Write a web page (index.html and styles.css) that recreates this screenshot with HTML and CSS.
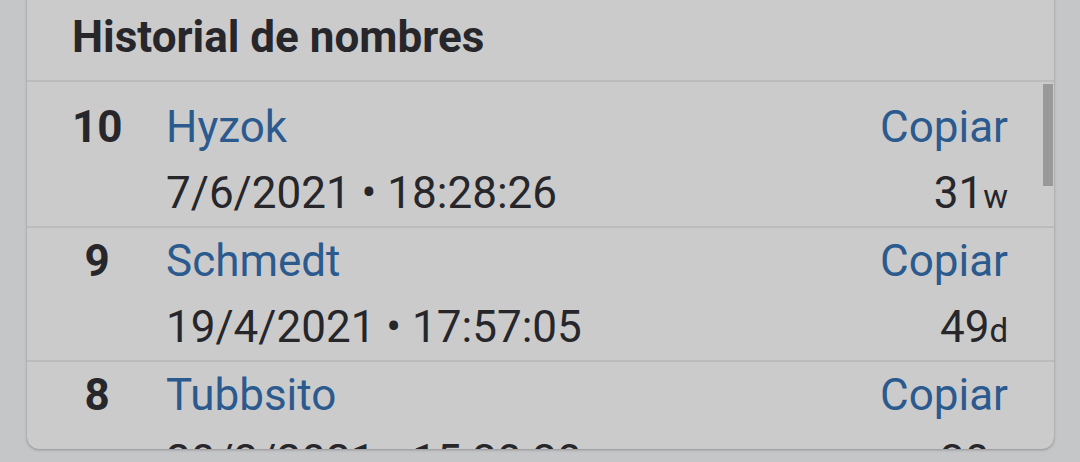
FILE: index.html
```html
<!DOCTYPE html>
<html lang="es">
<head>
  <meta charset="UTF-8">
  <title>Historial de nombres</title>
  <link rel="stylesheet" href="styles.css">
</head>
<body>

<div class="card">
  <div class="card-header">Historial de nombres</div>
  <div class="history">
    <div class="history-list">
      <div class="entry">
        <div class="num">10</div>
        <a class="name" href="#">Hyzok</a>
        <a class="copy" href="#">Copiar</a>
        <div class="date">7/6/2021 • 18:28:26</div>
        <div class="ago">31<small>w</small></div>
      </div>
      <div class="entry">
        <div class="num">9</div>
        <a class="name" href="#">Schmedt</a>
        <a class="copy" href="#">Copiar</a>
        <div class="date">19/4/2021 • 17:57:05</div>
        <div class="ago">49<small>d</small></div>
      </div>
      <div class="entry">
        <div class="num">8</div>
        <a class="name" href="#">Tubbsito</a>
        <a class="copy" href="#">Copiar</a>
        <div class="date">20/3/2021 • 15:30:30</div>
        <div class="ago">30<small>d</small></div>
      </div>
    </div>
    <div class="scrollbar"></div>
  </div>
</div>

</body>
</html>
```

FILE: styles.css
```css
body {
  margin: 0;
  padding: 0;
  background: #c5c6c8;
  font-family: Roboto, "Liberation Sans", sans-serif;
  color: #26262b;
  height: 462px;
  overflow: hidden;
}
.card {
  margin: -20px 26px 0 27px;
  height: 469px;
  background: #cbcbcb;
  border-radius: 12px;
  box-shadow: 0 1px 3px rgba(0,0,0,0.25), 0 0 1px rgba(0,0,0,0.2);
  overflow: hidden;
  display: flex;
  flex-direction: column;
}
.card-header {
  height: 75px;
  padding: 25px 45px 0;
  flex-shrink: 0;
  font-size: 44px;
  font-weight: bold;
  line-height: 64px;
  border-bottom: 2px solid #bcbcbc;
}
.history {
  flex: 1;
  position: relative;
  overflow: hidden;
}
.history-list {
  padding-top: 12px;
}
.entry {
  display: grid;
  grid-template-columns: 50px 1fr auto;
  column-gap: 44px;
  padding: 0 46px 0 45px;
  font-size: 44px;
  line-height: 66px;
  border-bottom: 2px solid #bcbcbc;
}
.num {
  font-weight: bold;
  text-align: center;
}
.name, .copy {
  color: #2b5a8f;
  text-decoration: none;
}
.date {
  grid-column: 2;
}
.ago {
  text-align: right;
}
.ago small {
  font-size: 33px;
  line-height: 0;
}
.scrollbar {
  position: absolute;
  top: 2px;
  right: 1px;
  width: 10px;
  height: 102px;
  background: #999999;
}
```
